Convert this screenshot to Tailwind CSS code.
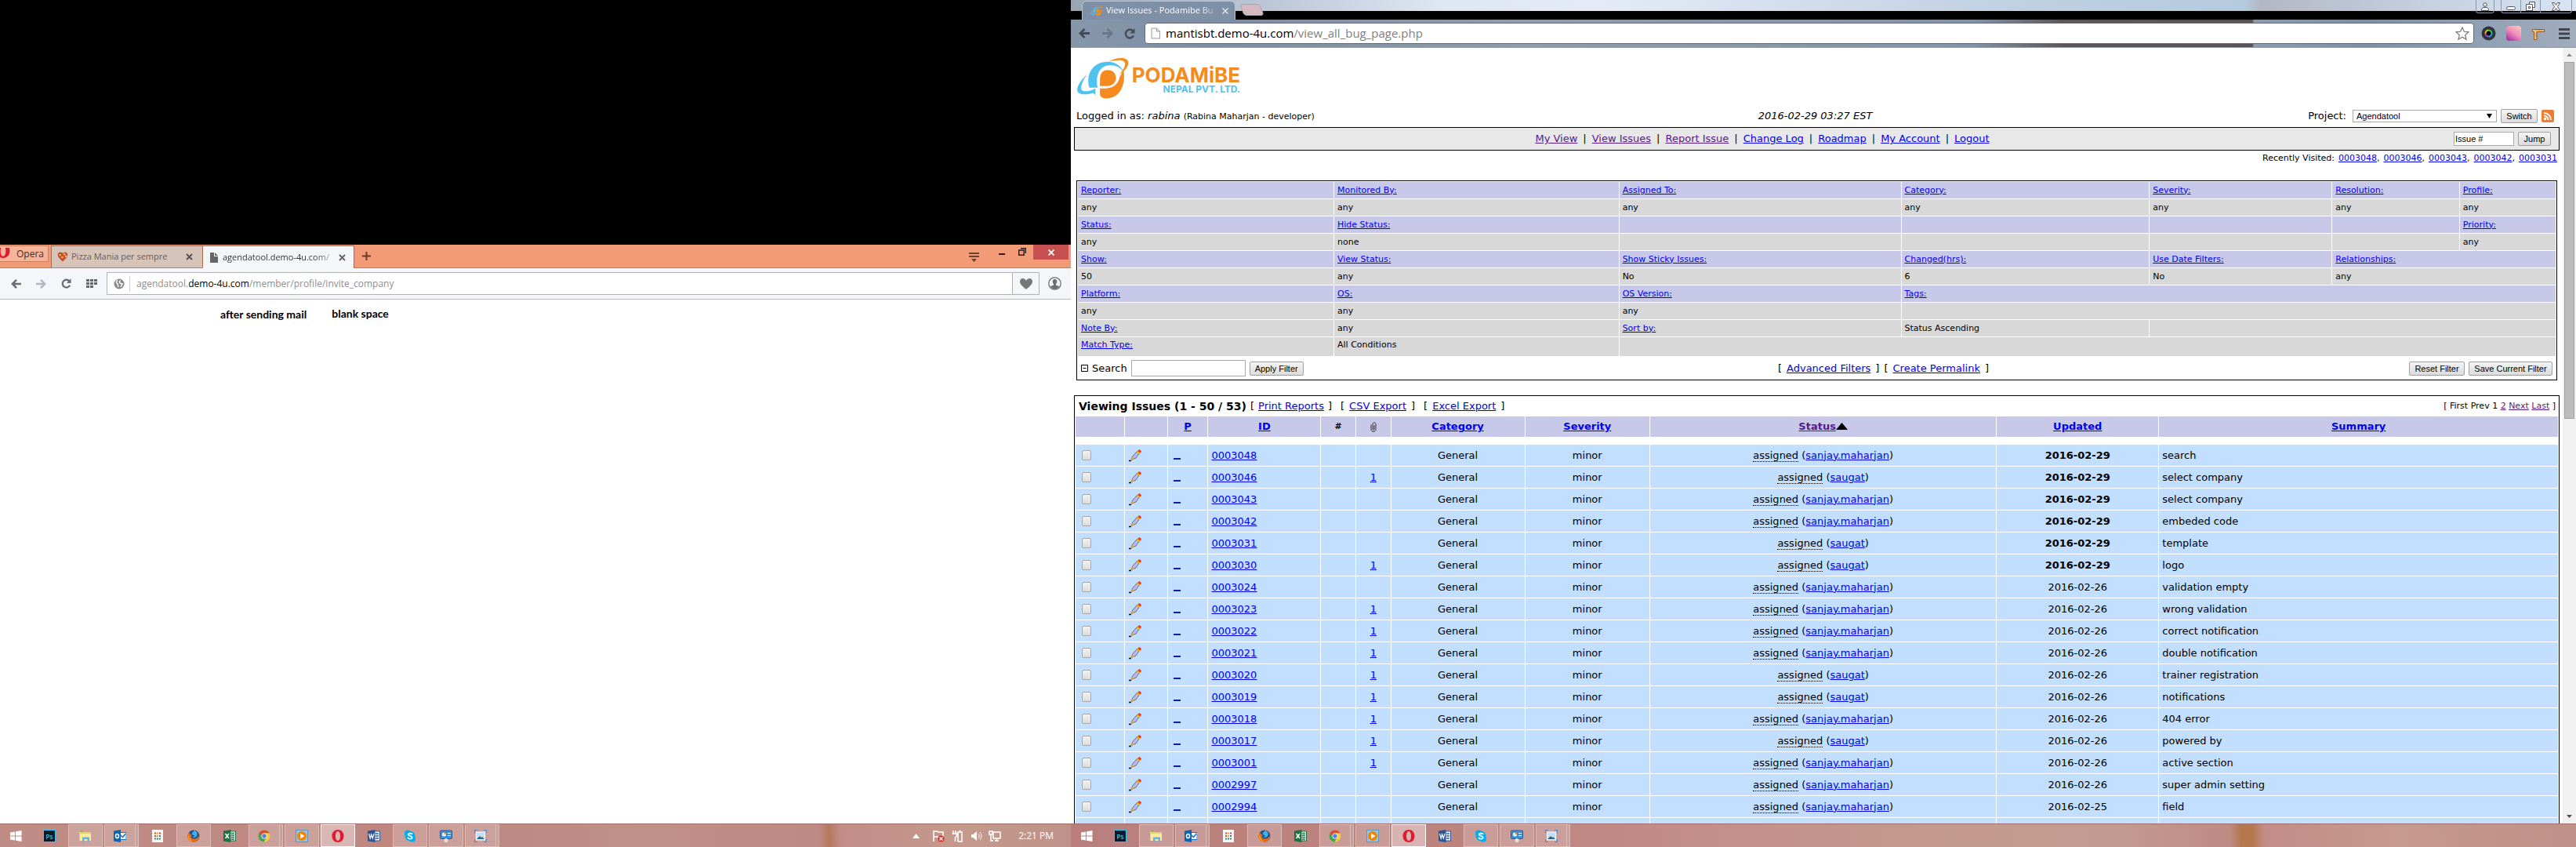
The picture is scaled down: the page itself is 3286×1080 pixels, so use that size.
<!DOCTYPE html>
<html lang="en">
<head>
<meta charset="utf-8">
<title>View Issues - Podamibe Bug Tracker</title>
<script src="https://cdn.jsdelivr.net/npm/@tailwindcss/browser@4"></script>
</head>
<body class="bg-black">
<svg class="hidden" aria-hidden="true">
  <symbol id="i-podamibe" viewBox="0 0 70 54">
    <path d="M14 22C4 30-2 42 3 46c5 3 14 2 19 0l3 3v-9c-5 3-14 5-17 3-4-3 0-13 6-21z" fill="#4fc3f0"/>
    <path d="M17 39C12 21 22 5 41 5c11 0 18 6 21 13-5-6-12-9-20-8-13 1-17 16-14 29z" fill="#4fc3f0"/>
    <path d="M42 5C52-1 66-2 68 5c1 6-4 12-11 16 5-6 9-12 6-16-3-3-11-2-21 0z" fill="#f58a1f"/>
    <path d="M31 37V28c0-9 5-12 10-12 7 0 11 5 11 10 0 7-5 11-12 11z" fill="#f58a1f"/>
    <path d="M62 16c3 16-3 36-20 37-7 1-11-2-11-6v-7h8c10 0 16-6 18-15z" fill="#f58a1f"/>
  </symbol>
  <symbol id="i-win" viewBox="0 0 16 16"><path d="M1 3.400 7 2.500v5H1zM8 2.300 15.500 1v6.500H8zM1 8.500h6v5l-6-.9zM8 8.500h7.500V15L8 13.700z" fill="#fff"/></symbol>
  <symbol id="i-ps" viewBox="0 0 16 16"><rect x=".5" y=".5" width="15" height="15" fill="#0a1a2b" stroke="#31c5f4"/><text x="8" y="11.500" font-size="8" font-family="Open Sans, sans-serif" font-weight="600" text-anchor="middle" fill="#31c5f4">Ps</text></symbol>
  <symbol id="i-folder" viewBox="0 0 16 16"><path d="M0 2h5l1 1h9v11H0z" fill="#e7d06e"/><path d="M1 5h14v9H1z" fill="#f8eca0"/><path d="M4 15V9.500h9V15h-2.500v-3h-4v3z" fill="#5fb4e0"/><path d="M1 2h4" stroke="#53b02f"/></symbol>
  <symbol id="i-outlook" viewBox="0 0 16 16"><rect x="8" y="3.500" width="8" height="9" fill="#fff" stroke="#1473c4"/><path d="m9 7 2.500 2.500L15 5" stroke="#1473c4" stroke-width="1.500" fill="none"/><path d="M0 1.500 9 0v16l-9-1.500z" fill="#0b63b3"/><ellipse cx="4.500" cy="8" rx="2" ry="2.600" fill="none" stroke="#fff" stroke-width="1.500"/></symbol>
  <symbol id="i-apps" viewBox="0 0 16 16"><path d="M1 0h14v16H1z" fill="#f6f6f6"/><path d="M4 3.500h2v2H4zM10 3.500h2v2h-2zM4 7h2v2H4z" fill="#e2412e"/><path d="M7 3.500h2v2H7zM7 7h2v2H7z" fill="#f0a020"/><path d="M10 7h2v2h-2zM7 10.500h2v2H7z" fill="#2b78d4"/><path d="M4 10.500h2v2H4zM10 10.500h2v2h-2z" fill="#2c9e4b"/></symbol>
  <symbol id="i-firefox" viewBox="0 0 16 16"><circle cx="8" cy="8" r="7.500" fill="#1c4f8f"/><path d="M9 1c4 1 5 6 2 8-1 1-4 1-5 0 2 0 3-1 3-2-2 0-4-1-3-3z" fill="#3fb2e8"/><path d="M2 3C-1 8 0 14 6 15.500c6 1 10-4 9.500-9.500C14 10 11 12 8 11.500 4 11 4 8 6 7 4 6 3 5 2 3z" fill="#ec6b12"/><path d="M1.500 6c-1 4 1 8 5 9.300C3 12 2 9 1.500 6z" fill="#f8b62b"/></symbol>
  <symbol id="i-excel" viewBox="0 0 16 16"><rect x="8" y="2" width="7.500" height="12" fill="#fff" stroke="#1e7145"/><path d="M10 4.500h4M10 7h4M10 9.500h4M10 12h4" stroke="#1e7145" stroke-width="1.300"/><path d="M0 1.500 9.500 0v16L0 14.500z" fill="#1e7145"/><path d="m2.500 5 4.500 6M7 5l-4.500 6" stroke="#fff" stroke-width="1.500"/></symbol>
  <symbol id="i-chrome" viewBox="0 0 16 16"><circle cx="8" cy="8" r="7.500" fill="#f3cb3c"/><path d="M1.500 4.200A7.500 7.500 0 0 1 14.500 4.200H8L5 9.800z" fill="#dc4a3a"/><path d="M1.500 4.200A7.500 7.500 0 0 0 7.500 15.500L11 9.800 5 9.800z" fill="#3fa652"/><circle cx="8" cy="8" r="3.500" fill="#fff"/><circle cx="8" cy="8" r="2.700" fill="#4a86e0"/></symbol>
  <symbol id="i-wmp" viewBox="0 0 16 16"><rect x=".5" y=".5" width="15" height="15" fill="#8fc6ea" stroke="#5a98c4"/><circle cx="8" cy="8" r="6" fill="#f58200"/><path d="M6 4.500 11.500 8 6 11.500z" fill="#fff"/></symbol>
  <symbol id="i-opera" viewBox="0 0 16 16"><path fill-rule="evenodd" d="M8 0c4.500 0 7.500 3.500 7.500 8S12.500 16 8 16 .5 12.500.5 8 3.500 0 8 0zm0 2C6 2 5 5 5 8s1 6 3 6 3-3 3-6-1-6-3-6z" fill="#e01b2f"/></symbol>
  <symbol id="i-word" viewBox="0 0 16 16"><rect x="8" y="2" width="7.500" height="12" fill="#fff" stroke="#2a5699"/><path d="M10 5h4M10 8h4M10 11h4" stroke="#2a5699" stroke-width="1.300"/><path d="M0 1.500 9.500 0v16L0 14.500z" fill="#2a5699"/><path d="m1.500 5 1.700 6L4.700 6l1.600 5L8 5" stroke="#fff" stroke-width="1.200" fill="none"/></symbol>
  <symbol id="i-skype" viewBox="0 0 16 16"><circle cx="8" cy="8" r="6.500" fill="#00aff0"/><circle cx="5" cy="4.500" r="4" fill="#00aff0"/><circle cx="11" cy="11.500" r="4" fill="#00aff0"/><path d="M11 5.800C10.500 4.500 6 3.700 5.700 6c-.2 2 5.200 1.500 5 4-.2 2.500-5 2-5.500-.3" stroke="#fff" stroke-width="1.700" fill="none"/></symbol>
  <symbol id="i-panel" viewBox="0 0 16 16"><rect x=".5" y="1" width="15" height="10.500" rx="1" fill="#3b8fd8" stroke="#245f9c"/><circle cx="5.500" cy="6" r="2.500" fill="#fff"/><path d="M5.500 6V3.500A2.500 2.500 0 0 1 8 6z" fill="#f0901e"/><path d="M10 4.500h4M10 7.500h4" stroke="#fff"/><circle cx="8" cy="13.500" r="2.500" fill="#dfe3e8"/></symbol>
  <symbol id="i-photo" viewBox="0 0 16 16"><path d="M0 4V0h4M12 0h4v4M16 12v4h-4M4 16H0v-4" stroke="#3f8fd0" stroke-width="2" fill="none"/><rect x="2.500" y="3" width="11" height="10" fill="#bfe0f6" stroke="#fff"/><path d="m3 12 4-4 2 2 1-1 3 3z" fill="#2b6a8c"/></symbol>
  <symbol id="i-pencil" viewBox="0 0 16 16"><path d="M0 14.500h3" stroke="#000" stroke-width="1.500"/><path d="M2.500 14 5 8.500 11 2l3 2-5 7z" fill="#bcb9ee" stroke="#55506a" stroke-width=".8"/><path d="M2 14.500 4.500 10 7 12z" fill="#e0b030"/><path d="M10 3.500 12 1l3 2.200-1.500 3z" fill="#e8b400"/><path d="M11.500 2 13 0l3 2-1 2.500z" fill="#e23a1c"/></symbol>
  <symbol id="i-page" viewBox="0 0 12 14"><path d="M1 .5h6.500l4 4v9H1z" fill="#fafafa" stroke="#9a9a9a"/><path d="M7.500.5v4h4" fill="none" stroke="#9a9a9a"/></symbol>
  <symbol id="i-back" viewBox="0 0 16 14"><path d="M8 1 2 7l6 6M2 7h13" fill="none" stroke="currentColor" stroke-width="3"/></symbol>
  <symbol id="i-fwd" viewBox="0 0 16 14"><path d="m8 1 6 6-6 6M14 7H1" fill="none" stroke="currentColor" stroke-width="3"/></symbol>
  <symbol id="i-reload" viewBox="0 0 14 14"><path d="M12 9.500A5.300 5.300 0 1 1 11.500 4" fill="none" stroke="currentColor" stroke-width="2.500"/><path d="M13.500 0v6.500H7.500z" fill="currentColor"/></symbol>
</svg>

<div class="flex h-screen w-full overflow-hidden">
  <!-- Left monitor: Opera -->
  <section class="flex min-w-0 flex-[1366_1_0%] flex-col bg-black pt-78 font-['Open_Sans',sans-serif]">
    <div class="flex h-[30px] shrink-0 items-stretch border-b border-[#c47a58] bg-[#f29b76]">
      <button class="mt-px flex h-[21px] w-[62px] items-center gap-[6px] border border-l-0 border-[#c98060] bg-[#f6b499] text-[12px] text-[#4a2a20]">
        <span class="h-[15px] w-[15px] shrink-0 overflow-hidden"><svg class="-mt-[5px] -ml-[7px] h-[18px] w-[22px]" preserveAspectRatio="none"><use href="#i-opera"/></svg></span>Opera</button>
      <div class="mt-px ml-[3px] flex w-[194px] items-center border border-b-0 border-[#b06a48] bg-[#d6c4bb] pr-3 pl-[7px] text-[11px] text-[#6b5c55]">
        <svg class="mr-1 h-[15px] w-[14px]" viewBox="0 0 15 15"><path d="M7.500 14C3 10 0 7 1 3c2-3 5-2 6.500 0C9 1 12 0 14 3c1 4-2 7-6.500 11z" fill="#d9482a"/><path d="M3 4h2v2H3zM9 3h2v2H9zM6 7h2v2H6zM11 6h2v2h-2z" fill="#f7e08a"/><path d="M5 2h2v2H5zM8 9h2v2H8zM2 6h2v2H2z" fill="#4d8a2a"/></svg>
        <span class="grow whitespace-nowrap">Pizza Mania per sempre</span>
        <svg class="h-[9px] w-[9px]" viewBox="0 0 9 9"><path d="m1 1 7 7M8 1 1 8" stroke="#555" stroke-width="2"/></svg>
      </div>
      <div class="mt-px -mb-px flex w-[193px] items-center border-t border-r border-[#b06a48] bg-[#f4f6f9] pr-[10px] pl-[9px] text-[11px] text-[#333]">
        <svg class="mr-[6px] h-[13px] w-[10px] shrink-0" viewBox="0 0 10 13"><path d="M0 0h5v5h5v8H0zM6 0l4 4H6z" fill="#666"/></svg>
        <span class="min-w-0 grow whitespace-nowrap [mask-image:linear-gradient(to_right,black_80%,#0003)]">agendatool.demo-4u.com/</span>
        <svg class="ml-1 h-[9px] w-[9px] shrink-0" viewBox="0 0 9 9"><path d="m1 1 7 7M8 1 1 8" stroke="#666" stroke-width="2"/></svg>
      </div>
      <svg class="ml-[10px] h-[11px] w-[11px] self-center" viewBox="0 0 11 11"><path d="M5.500 0v11M0 5.500h11" stroke="#6b3a28" stroke-width="2"/></svg>
      <div class="ml-auto flex items-start pr-[3px]">
        <svg class="mt-[10px] h-[12px] w-[13px]" viewBox="0 0 13 12"><path d="M0 1h13M0 5h13" stroke="#6a4030" stroke-width="2"/><path d="M3 8h7l-3.500 4z" fill="#6a4030"/></svg>
        <span class="mt-[11px] ml-[25px] h-[2px] w-[8px] bg-[#2a1c18]"></span>
        <svg class="mt-1 ml-[17px] h-[10px] w-[10px]" viewBox="0 0 10 10"><path d="M.7 3h6.500v6.300H.7zM3 .7h6.300V7" fill="none" stroke="#2a1c18" stroke-width="1.400"/></svg>
        <span class="ml-[9px] flex h-[19px] w-[45px] items-center justify-center bg-[#c75050]"><svg class="h-[8px] w-[8px]" viewBox="0 0 8 8"><path d="m.5.5 7 7M7.500.5l-7 7" stroke="#fff" stroke-width="1.800"/></svg></span>
      </div>
    </div>
    <div class="flex h-[40px] shrink-0 items-center border-b border-[#b9bcc0] bg-[#f4f6f9] pl-[14px] text-[#6a7078]">
      <svg class="h-[12px] w-[14px]"><use href="#i-back"/></svg>
      <svg class="ml-[17px] h-[12px] w-[14px] text-[#b4b8bc]"><use href="#i-fwd"/></svg>
      <svg class="ml-[19px] h-[13px] w-[13px]"><use href="#i-reload"/></svg>
      <svg class="ml-[19px] h-[12px] w-[14px]" viewBox="0 0 14 12"><path d="M0 0h4v3H0zM5 0h4v3H5zM10 0h4v3h-4zM0 4h4v3H0zM5 4h4v3H5zM10 4h4v3h-4zM0 8h4v3H0zM5 8h4v3H5z" fill="#666"/></svg>
      <div class="ml-[12px] flex h-[29px] min-w-0 grow items-center border border-[#b0b3b7] bg-white pl-[8px]">
        <svg class="h-[14px] w-[14px]" viewBox="0 0 14 14"><circle cx="7" cy="7" r="6.500" fill="#888"/><path d="M5 2c-2 2-2 4 0 5l1 4M9 3c-2 0-2 2-1 3l3 1-2 4" stroke="#fff" stroke-width="1.500" fill="none"/></svg>
        <span class="ml-[6px] h-5 w-px bg-[#ccc]"></span>
        <span class="ml-2 grow text-[12px] whitespace-nowrap text-[#8e8e8e]">agendatool.<span class="text-black">demo-4u.com</span>/member/profile/invite_company</span>
      </div>
      <span class="-ml-px flex h-[29px] w-[35px] items-center justify-center border border-[#b0b3b7]"><svg class="h-[14px] w-[16px]" viewBox="0 0 16 14"><path d="M8 14C3 10 0 7 0 4c0-5 6-5 8-1 2-4 8-4 8 1 0 3-3 6-8 10z" fill="#777"/></svg></span>
      <svg class="mr-[12px] ml-[11px] h-[17px] w-[17px]" viewBox="0 0 17 17"><circle cx="8.500" cy="8.500" r="7.700" fill="none" stroke="#6d6f72" stroke-width="1.300"/><path d="M8.500 3c4 0 3 5 1.500 6v1.500l4 1.500c-3 5-8 5-11 0l4-1.500V9C5.500 8 4.500 3 8.500 3z" fill="#6d6f72"/></svg>
    </div>
    <div class="flex grow gap-8 bg-white pt-[7px] pl-[281px] font-['Lato',sans-serif] text-[14px] font-bold text-black">
      <span class="pt-px">after sending mail</span><span>blank space</span>
    </div>
    <footer class="flex h-[30px] shrink-0 items-center border-t border-[#a0706a] bg-[linear-gradient(88deg,#c08c86_0%,#bf8680_40%,#c09088_60%,#c08a84_76.500%,#b5785c_77.400%,#c48c88_78.500%,#c49a8c_90%,#be9288_100%)]">
      <nav class="apps flex h-full items-center gap-[2px]"></nav>
      <div class="ml-auto flex items-center gap-2 pr-[22px] text-white">
        <svg class="h-[6px] w-[9px]" viewBox="0 0 9 6"><path d="M4.500 0 9 6H0z" fill="#fff"/></svg>
        <svg class="ml-2 h-4 w-4" viewBox="0 0 16 16"><path d="M2 1v14M2 2h5l1 1h6v7H8L7 9H2" fill="none" stroke="#fff" stroke-width="1.500"/><circle cx="11.500" cy="11.500" r="4" fill="#dc2a2a"/><path d="m9.500 9.500 4 4M13.500 9.500l-4 4" stroke="#fff" stroke-width="1.300"/></svg>
        <svg class="h-4 w-4" viewBox="0 0 16 16"><path d="M9 3h5v12H9zM10.500 1.500h2M3 1v4M6 1v4M1.500 5h6v3l-2 2v5" fill="none" stroke="#fff" stroke-width="1.500"/></svg>
        <svg class="h-4 w-4" viewBox="0 0 16 16"><path d="M2 6h2.500L9 2v12l-4.500-4H2z" fill="#fff"/><path d="M11 5c1.500 2 1.500 4 0 6M13 3c2.500 3 2.500 7 0 10" fill="none" stroke="#fff"/></svg>
        <svg class="h-4 w-4" viewBox="0 0 16 16"><path d="M6 3h9v8H6zM8 14h5M10.500 11v3M1 2h4v4H1zM3 6v8h3" fill="none" stroke="#fff" stroke-width="1.500"/></svg>
        <span class="ml-[14px] text-[12px]">2:21 PM</span>
      </div>
    </footer>
  </section>

  <!-- Right monitor: Chrome with MantisBT -->
  <section class="flex min-w-0 flex-[1920_1_0%] flex-col bg-black font-['DejaVu_Sans',sans-serif] text-[13px] text-black">
    <div class="relative flex h-[25px] shrink-0 items-start font-['Open_Sans',sans-serif]">
      <div class="absolute inset-x-0 top-0 h-[14px] bg-[linear-gradient(90deg,#9aa5b4_0%,#b9c4d4_12%,#dfe7f3_25%,#e4ebf6_35%,#c3d2e4_60%,#b4cade_78%,#b3b7c4_79%,#c5d0e0_90%,#d9e4f3_100%)]"></div>
      <div class="relative mt-px ml-[14px] flex h-6 w-[196px] items-center rounded-t-md border border-b-0 border-[#b7c3d2] bg-[#7f90a6] pr-[8px] pl-[10px]">
        <svg class="h-4 w-4 shrink-0"><use href="#i-podamibe"/></svg>
        <span class="ml-1 min-w-0 grow text-[11px] whitespace-nowrap text-white [mask-image:linear-gradient(to_right,black_85%,#0003)]">View Issues - Podamibe Bu</span>
        <svg class="ml-2 h-2 w-2 shrink-0" viewBox="0 0 8 8"><path d="m.5.5 7 7M7.500.5l-7 7" stroke="#dfe5ec" stroke-width="1.500"/></svg>
      </div>
      <span class="relative mt-[5px] ml-2 h-[15px] w-[26px] skew-x-[20deg] rounded-sm border border-[#a9a3ad] bg-[#d3b9c3]"></span>
      <div class="relative mr-[5px] ml-auto flex h-[17px] gap-[8px]">
        <span class="flex w-6 items-center justify-center rounded-b border border-t-0 border-[#8b96a6]"><svg class="h-[11px] w-[10px]" viewBox="0 0 10 11"><circle cx="5" cy="3" r="2.300" fill="#eef2f8" stroke="#50565f"/><path d="M.5 10.500v-2l2-2h5l2 2v2z" fill="#eef2f8" stroke="#50565f"/></svg></span>
        <span class="flex w-[91px] items-center divide-x divide-[#8b96a6] rounded-b border border-t-0 border-[#8b96a6]">
          <i class="flex h-full w-[25px] items-end justify-center pb-[3px]"><b class="h-[5px] w-3 rounded-sm border border-[#50565f] bg-white"></b></i>
          <i class="flex h-full w-[25px] items-center justify-center"><svg class="h-3 w-3" viewBox="0 0 12 12"><path d="M4.500.5h7v7h-3v-4h-4z" fill="#fff" stroke="#50565f"/><path d="M.5 3.500h8v8h-8zM3.500 6.500h2v2h-2z" fill="#fff" stroke="#50565f"/></svg></i>
          <i class="flex h-full grow items-center justify-center"><svg class="h-[11px] w-[11px]" viewBox="0 0 11 11"><path d="M.5.5h3l2 3 2-3h3L7.500 5.500l3 5h-3l-2-3-2 3h-3l3-5z" fill="#fff" stroke="#50565f"/></svg></i>
        </span>
      </div>
    </div>
    <div class="flex h-9 shrink-0 items-center border-b border-[#8f959c] bg-[linear-gradient(90deg,#8797ab_0%,#7c8da4_9%,#8f9cad_30%,#8294ab_60%,#5c5558_66%,#5a5457_78.500%,#8b9cb1_78.600%,#7d90a9_86%,#a0adbd_100%)] pl-[10px] text-[#444c56]">
      <svg class="h-[13px] w-[15px]"><use href="#i-back"/></svg>
      <svg class="ml-[14px] h-[13px] w-[15px] text-[#6a7787]"><use href="#i-fwd"/></svg>
      <svg class="ml-[14px] h-[14px] w-[14px]"><use href="#i-reload"/></svg>
      <div class="ml-[12px] flex h-[27px] grow items-center rounded-sm border border-[#5f6d80] bg-white pr-[5px] pl-[7px] font-['Open_Sans',sans-serif] text-[15px] text-[#808080]">
        <svg class="h-[15px] w-3"><use href="#i-page"/></svg>
        <span class="ml-[7px] grow whitespace-nowrap"><span class="text-black">mantisbt.demo-4u.com</span>/view_all_bug_page.php</span>
        <svg class="h-[18px] w-[18px]" viewBox="0 0 18 18"><path d="m9 1 2.300 5.300 5.700.5-4.300 3.800 1.300 5.700-5-3-5 3 1.300-5.700L1 6.800l5.700-.5z" fill="#fff" stroke="#777" stroke-width="1.200"/></svg>
      </div>
      <div class="flex items-center gap-[13px] pr-2 pl-[9px]">
        <svg class="h-[19px] w-[19px]" viewBox="0 0 19 19"><circle cx="9.500" cy="9.500" r="9" fill="#30343a"/><circle cx="9.500" cy="9.500" r="5" fill="#0a0a0a"/><path d="M5.500 10A4 4 0 0 1 9 5.500" stroke="#e8c21c" stroke-width="2" fill="none"/><path d="M9 5.500A4 4 0 0 1 13.500 9" stroke="#3ed04c" stroke-width="2" fill="none"/><path d="M13.500 9A4 4 0 0 1 9 13.500" stroke="#2aa7e8" stroke-width="2" fill="none"/><path d="M9 13.500A4 4 0 0 1 5.500 10" stroke="#d02ad0" stroke-width="2" fill="none"/></svg>
        <span class="h-[19px] w-[19px] rounded-sm bg-[linear-gradient(35deg,#a01ca8,#f08ab8_50%,#ffd0c0)]"></span>
        <svg class="h-[18px] w-[18px]" viewBox="0 0 18 18"><path d="M1.500 3.500h15v3H7v10H3.500v-10h-2z" fill="#f0c486" stroke="#9a5a1e"/><path d="M7 3.500v1.500M10 3.500v1.500M13 3.500v1.500M5.500 9H7M5.500 12H7" stroke="#9a5a1e"/></svg>
        <svg class="ml-1 h-[14px] w-[14px]" viewBox="0 0 14 14"><path d="M0 1.500h14M0 7h14M0 12.500h14" stroke="#3f4650" stroke-width="3"/></svg>
      </div>
    </div>

    <div class="flex min-h-0 grow bg-white">
      <main class="min-w-0 grow overflow-hidden px-1">
        <header class="flex items-start pt-3 pl-[3px]">
          <svg class="h-[54px] w-[68px]"><use href="#i-podamibe"/></svg>
          <div class="mt-[13px] flex w-[141px] flex-col items-end font-['Inter',sans-serif] leading-none font-bold">
            <span class="text-[26px] leading-5 text-[#f58a1f]">PODAMiBE</span>
            <span class="text-[12px] leading-4 text-[#4fc3f0]">NEPAL PVT. LTD.</span>
          </div>
        </header>
        <div class="mt-[9px] flex h-[24px] items-center">
          <div class="flex-1 pl-[3px]">Logged in as: <i>rabina</i> <span class="text-[11px]">(Rabina Maharjan - developer)</span></div>
          <i>2016-02-29 03:27 EST</i>
          <form class="flex flex-1 items-center justify-end pr-[7px] font-['Liberation_Sans',sans-serif] text-[11px]">
            <label for="project" class="mr-[8px] font-['DejaVu_Sans',sans-serif] text-[13px]">Project:</label>
            <span class="relative"><select id="project" class="block h-4 w-[184px] appearance-none border border-[#a9a9a9] bg-white pl-1 leading-none"><option>Agendatool</option></select><svg class="pointer-events-none absolute top-[5px] right-[6px] h-[6px] w-[7px]" viewBox="0 0 7 6"><path d="M0 0h7L3.500 6z"/></svg></span>
            <button type="button" class="ml-[5px] h-[18px] w-[47px] rounded-xs border border-[#a0a0a0] bg-linear-to-b from-[#f4f4f4] to-[#dcdcdc]">Switch</button>
            <svg class="ml-[5px] h-4 w-4" viewBox="0 0 16 16"><rect width="16" height="16" rx="2" fill="#ee7d31"/><circle cx="4.500" cy="11.500" r="1.700" fill="#fff"/><path d="M3 7.500A5.500 5.500 0 0 1 8.500 13M3 4a9 9 0 0 1 9 9" stroke="#fff" stroke-width="1.900" fill="none"/></svg>
          </form>
        </div>
        <div class="mt-[2px] flex h-[30px] items-center border border-black bg-[#e8e8e8]">
          <nav class="flex grow justify-center gap-[7px]">
            <a href="#" class="text-[#551a8b] underline">My View</a><span>|</span><a href="#" class="text-[#551a8b] underline">View Issues</a><span>|</span><a href="#" class="text-[#551a8b] underline">Report Issue</a><span>|</span><a href="#" class="text-[#0000ee] underline">Change Log</a><span>|</span><a href="#" class="text-[#0000ee] underline">Roadmap</a><span>|</span><a href="#" class="text-[#0000ee] underline">My Account</a><span>|</span><a href="#" class="text-[#0000ee] underline">Logout</a>
          </nav>
          <form class="flex items-center gap-[5px] pr-[10px] pl-[5px] font-['Liberation_Sans',sans-serif] text-[11px]">
            <input type="text" aria-label="Issue number" value="Issue #" class="h-[18px] w-[77px] border border-[#a9a9a9] bg-white px-px">
            <button type="button" class="h-[18px] w-[42px] rounded-xs border border-[#a0a0a0] bg-linear-to-b from-[#f4f4f4] to-[#dcdcdc]">Jump</button>
          </form>
        </div>
        <p class="mt-[2px] flex justify-end gap-[5px] pr-[3px] text-[11px] leading-4 text-black"><span>Recently Visited:</span><span><a href="#" class="text-[#0000ee] underline">0003048</a>,</span><span><a href="#" class="text-[#0000ee] underline">0003046</a>,</span><span><a href="#" class="text-[#0000ee] underline">0003043</a>,</span><span><a href="#" class="text-[#0000ee] underline">0003042</a>,</span><a href="#" class="text-[#0000ee] underline">0003031</a></p>

        <section class="mx-[3px] mt-[20px] border border-black">
          <table class="w-full table-fixed border-separate border-spacing-x-px border-spacing-y-px text-[11px]">
            <colgroup><col class="w-[17.350%]"><col class="w-[19.300%]"><col class="w-[19.100%]"><col class="w-[16.800%]"><col class="w-[12.350%]"><col class="w-[8.600%]"><col></colgroup>
            <tbody id="filters"></tbody>
          </table>
          <div class="flex h-[29px] items-center px-[5px]">
            <form class="flex flex-1 items-center gap-[5px]">
              <svg class="h-[11px] w-[9px]" viewBox="0 0 9 11"><path d="M.5 1.500h8v8h-8zM2.500 5.500h4" fill="none" stroke="#000"/></svg>
              <label for="search">Search</label>
              <input id="search" type="text" class="h-[21px] w-[146px] border border-[#a9a9a9] bg-white">
              <button type="button" class="h-[18px] w-[69px] rounded-xs border border-[#a0a0a0] bg-linear-to-b from-[#f4f4f4] to-[#dcdcdc] font-['Liberation_Sans',sans-serif] text-[11px]">Apply Filter</button>
            </form>
            <div class="flex gap-[6px] pl-[170px]"><span>[</span><a href="#" class="text-[#0000ee] underline">Advanced Filters</a><span>]</span><span>[</span><a href="#" class="text-[#0000ee] underline">Create Permalink</a><span>]</span></div>
            <div class="flex flex-1 justify-end gap-[5px] font-['Liberation_Sans',sans-serif] text-[11px]">
              <button type="button" class="h-[18px] w-[71px] rounded-xs border border-[#a0a0a0] bg-linear-to-b from-[#f4f4f4] to-[#dcdcdc]">Reset Filter</button>
              <button type="button" class="h-[18px] w-[107px] rounded-xs border border-[#a0a0a0] bg-linear-to-b from-[#f4f4f4] to-[#dcdcdc]">Save Current Filter</button>
            </div>
          </div>
        </section>

        <section class="mt-[19px] border border-b-0 border-black">
          <div class="flex h-[25px] items-center justify-between pt-px pr-1 pl-[5px]">
            <div class="flex items-center gap-[11px]">
              <span class="flex items-center gap-[5px]"><b class="text-[14px]">Viewing Issues (1 - 50 / 53)</b><span>[</span><a href="#" class="text-[#0000ee] underline">Print Reports</a><span>]</span></span>
              <span class="flex gap-[6px]"><span>[</span><a href="#" class="text-[#0000ee] underline">CSV Export</a><span>]</span></span>
              <span class="flex gap-[6px]"><span>[</span><a href="#" class="text-[#0000ee] underline">Excel Export</a><span>]</span></span>
            </div>
            <div class="text-[11px]">[ First Prev 1 <a href="#" class="text-[#551a8b] underline">2</a> <a href="#" class="text-[#551a8b] underline">Next</a> <a href="#" class="text-[#551a8b] underline">Last</a> ]</div>
          </div>
          <table class="w-full table-fixed border-separate border-spacing-x-px border-spacing-y-px">
            <colgroup><col class="w-[3.280%]"><col class="w-[2.870%]"><col class="w-[2.700%]"><col class="w-[7.600%]"><col class="w-[2.320%]"><col class="w-[2.320%]"><col class="w-[9.030%]"><col class="w-[8.430%]"><col class="w-[23.450%]"><col class="w-[10.960%]"><col></colgroup>
            <thead>
              <tr class="h-[26px] bg-[#c8c8e8] text-[#0000ee]">
                <th></th><th></th>
                <th><a href="#" class="underline">P</a></th>
                <th><a href="#" class="underline">ID</a></th>
                <th class="text-[11px] text-black">#</th>
                <th><svg class="mx-auto h-[13px] w-[8px]" viewBox="0 0 8 13"><path d="M1 3.500V9c0 4.500 6 4.500 6 0V3C7 0 3 0 3 3v6c0 1.500 2 1.500 2 0V4" fill="none" stroke="#333"/></svg></th>
                <th><a href="#" class="underline">Category</a></th>
                <th><a href="#" class="underline">Severity</a></th>
                <th><a href="#" class="text-[#551a8b] underline">Status</a><svg class="inline h-[9px] w-[15px] align-baseline" viewBox="0 0 15 9"><path d="M7.500 0 15 9H0z"/></svg></th>
                <th><a href="#" class="underline">Updated</a></th>
                <th><a href="#" class="underline">Summary</a></th>
              </tr>
              <tr class="h-2"><td colspan="11"></td></tr>
            </thead>
            <tbody id="issues"></tbody>
          </table>
        </section>
      </main>
      <div class="flex w-[17px] shrink-0 flex-col items-center bg-[#f1f1f1]">
        <svg class="my-[7px] h-1 w-[7px] shrink-0" viewBox="0 0 7 4"><path d="M0 4 3.500 0 7 4z" fill="#8a8a8a"/></svg>
        <span class="h-[46%] w-[13px] border border-[#a0a0a0] bg-[#bcbcbc]"></span>
        <svg class="mt-auto mb-[7px] h-1 w-[7px]" viewBox="0 0 7 4"><path d="M0 0h7L3.500 4z" fill="#505050"/></svg>
      </div>
    </div>
    <footer class="flex h-[30px] shrink-0 items-center border-t border-[#a0706a] bg-[linear-gradient(88deg,#b97f7c_0%,#bd8580_30%,#c58f8b_44%,#c39b8d_58%,#c39a90_70%,#c08a84_77%,#b5784e_77.700%,#b5784e_78.500%,#c48c88_79.300%,#c69a8c_88%,#c09088_100%)]">
      <nav class="apps flex h-full items-center gap-[2px]"></nav>
    </footer>
  </section>
</div>

<script>
const head = 'h-[21px] bg-[#c8c8e8]', body = 'h-[21px] bg-[#d8d8d8]', tail = 'h-[24px] bg-[#d8d8d8] align-top';
const link = t => t ? `<a href="#" class="text-[#0000ee] underline">${t}</a>` : '';
const cell = (html, span = 1) => `<td colspan="${span}" class="px-1 leading-5">${html}</td>`;
const pair = (names, values) => {
  const row = (list, cls, f) => `<tr class="${cls}">${list.map((t, i) => cell(f(t), i === list.length - 1 ? 8 - list.length : 1)).join('')}</tr>`;
  return row(names, head, link) + row(values, body, t => t);
};
document.getElementById('filters').innerHTML =
  pair(['Reporter:', 'Monitored By:', 'Assigned To:', 'Category:', 'Severity:', 'Resolution:', 'Profile:'], ['any', 'any', 'any', 'any', 'any', 'any', 'any']) +
  pair(['Status:', 'Hide Status:', '', '', '', '', 'Priority:'], ['any', 'none', '', '', '', '', 'any']) +
  pair(['Show:', 'View Status:', 'Show Sticky Issues:', 'Changed(hrs):', 'Use Date Filters:', 'Relationships:'], ['50', 'any', 'No', '6', 'No', 'any']) +
  pair(['Platform:', 'OS:', 'OS Version:', 'Tags:'], ['any', 'any', 'any', '']) +
  `<tr class="${body}">${cell(link('Note By:'))}${cell('any')}${cell(link('Sort by:'))}${cell('Status Ascending')}${cell('', 3)}</tr>` +
  `<tr class="${tail}">${cell(link('Match Type:'))}${cell('All Conditions')}${cell('', 5)}</tr>`;

const S = 'sanjay.maharjan', G = 'saugat';
const issues = [
  ['0003048', '', S, '2016-02-29', 'search'], ['0003046', '1', G, '2016-02-29', 'select company'],
  ['0003043', '', S, '2016-02-29', 'select company'], ['0003042', '', S, '2016-02-29', 'embeded code'],
  ['0003031', '', G, '2016-02-29', 'template'], ['0003030', '1', G, '2016-02-29', 'logo'],
  ['0003024', '', S, '2016-02-26', 'validation empty'], ['0003023', '1', S, '2016-02-26', 'wrong validation'],
  ['0003022', '1', S, '2016-02-26', 'correct notification'], ['0003021', '1', S, '2016-02-26', 'double notification'],
  ['0003020', '1', G, '2016-02-26', 'trainer registration'], ['0003019', '1', G, '2016-02-26', 'notifications'],
  ['0003018', '1', S, '2016-02-26', '404 error'], ['0003017', '1', G, '2016-02-26', 'powered by'],
  ['0003001', '1', S, '2016-02-26', 'active section'], ['0002997', '', S, '2016-02-26', 'super admin setting'],
  ['0002994', '', S, '2016-02-25', 'field']];
document.getElementById('issues').innerHTML = issues.map(([id, n, who, date, sum]) => `
  <tr class="h-[27px] bg-[#c2dfff] text-center">
    <td class="pl-2 text-left"><input type="checkbox" aria-label="Select ${id}" class="block h-[13px] w-3 appearance-none rounded-xs border border-[#a8a8a8] bg-linear-to-b from-[#f2f2f2] to-[#dcdcdc]"></td>
    <td class="pl-[5px] text-left"><svg class="h-4 w-4"><use href="#i-pencil"/></svg></td>
    <td class="pl-[7px] text-left"><a href="#" aria-label="Priority" class="mt-2 block h-[2px] w-[9px] bg-[#1a1aaa]"></a></td>
    <td class="px-1 text-left">${link(id)}</td><td></td><td>${link(n)}</td>
    <td>General</td><td>minor</td>
    <td><span class="border-b border-dotted border-black">assigned</span> (${link(who)})</td>
    <td class="${date === '2016-02-29' ? 'font-bold' : 'font-normal'}">${date}</td>
    <td class="px-1 text-left">${sum}</td>
  </tr>`).join('') + '<tr class="h-[27px] bg-[#c2dfff]">' + '<td></td>'.repeat(11) + '</tr>';

const start = 'flex h-full w-[39px] items-center justify-center';
const plain = 'flex h-full w-[44px] items-center justify-center';
const open = 'flex h-full w-[44px] items-center justify-center border border-[#d9bcb6] bg-white/20';
const active = 'flex h-full w-[44px] items-center justify-center border border-white bg-white/40';
const stack = 'flex h-full w-[44px] items-stretch';
const apps = [['win', start], ['ps', plain], ['folder', open], ['outlook', stack], ['apps', plain], ['firefox', open], ['excel', plain], ['chrome', stack], ['wmp', open], ['opera', active], ['word', plain], ['skype', open], ['panel', open], ['photo', stack]];
const icon = n => `<svg class="h-4 w-4"><use href="#i-${n}"/></svg>`;
document.querySelectorAll('.apps').forEach(nav => {
  nav.innerHTML = apps.map(([n, c]) => `<button aria-label="${n}" class="${c}">${c === stack
    ? `<span class="flex grow items-center justify-center border border-[#d9bcb6] bg-white/20">${icon(n)}</span><span class="w-1 border border-l-0 border-[#d9bcb6] bg-white/20"></span>`
    : icon(n)}</button>`).join('');
});
</script>
</body>
</html>
